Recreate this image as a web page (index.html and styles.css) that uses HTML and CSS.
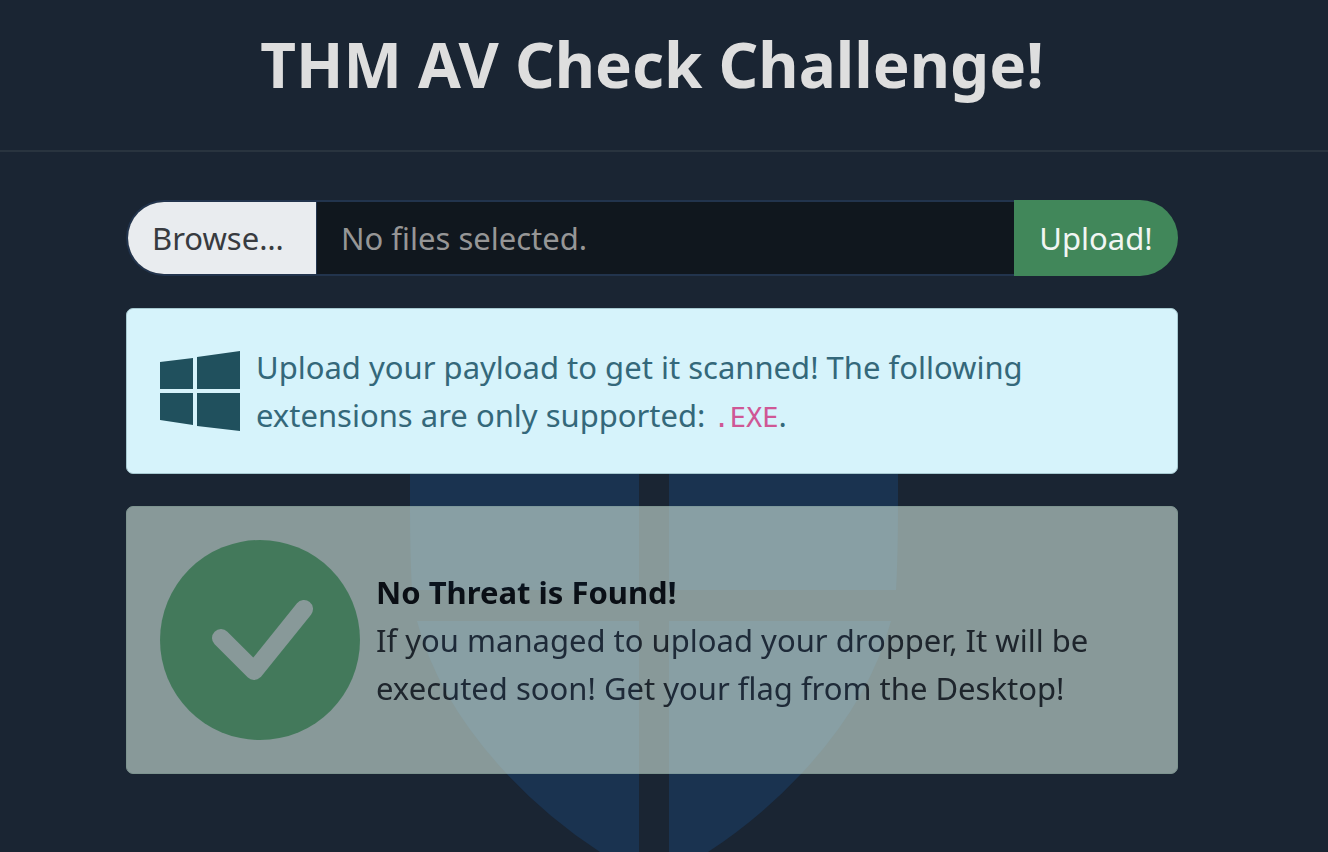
FILE: index.html
```html
<!DOCTYPE html>
<html lang="en">
<head>
<meta charset="utf-8">
<meta name="viewport" content="width=device-width, initial-scale=1">
<title>THM AV Check Challenge!</title>
<link rel="stylesheet" href="styles.css">
</head>
<body>
<svg class="shield" viewBox="0 0 488 540" aria-hidden="true">
  <path d="M0 60Q120 45 229 0V260H2Q0 225 0 170Z"/>
  <path d="M488 60Q368 45 259 0V260H486Q488 225 488 170Z"/>
  <path d="M7 291H229V540Q190 522 190 522Q138 488 96 443Q28 370 7 291Z"/>
  <path d="M481 291H259V540Q298 522 298 522Q350 488 392 443Q460 370 481 291Z"/>
</svg>
<header class="header">
  <h1 class="title">THM AV Check Challenge!</h1>
</header>
<main class="main">
  <form class="upload">
    <div class="picker">
      <label class="browse" for="file">Browse…</label>
      <span class="filename">No files selected.</span>
      <input class="file" id="file" type="file">
    </div>
    <button class="submit" type="button">Upload!</button>
  </form>
  <section class="alert info">
    <svg class="windows" viewBox="0 0 80 80" aria-hidden="true">
      <path d="M0 11L33 7V38H0ZM37 6L80 0V38H37ZM0 42H33V74L0 69ZM37 42H80V80L37 75Z"/>
    </svg>
    <p class="text">Upload your payload to get it scanned! The following extensions are only supported: <code class="code">.EXE</code>.</p>
  </section>
  <section class="alert success">
    <svg class="check" viewBox="0 0 200 200" aria-hidden="true">
      <mask id="tick">
        <rect width="200" height="200" fill="#fff"/>
        <path d="M61 98L94 131L144 69" fill="none" stroke="#000" stroke-width="18" stroke-linecap="round" stroke-linejoin="round"/>
      </mask>
      <circle cx="100" cy="100" r="100" mask="url(#tick)"/>
    </svg>
    <p class="text"><strong class="strong">No Threat is Found!</strong><br>If you managed to upload your dropper, It will be executed soon! Get your flag from the Desktop!</p>
  </section>
</main>
</body>
</html>
```
FILE: styles.css
```css
* { box-sizing: border-box; }
body {
  margin: 0;
  min-height: 100vh;
  position: relative;
  overflow: hidden;
  background: #1a2533;
  color: #212529;
  font: 31px/48px "Noto Sans", sans-serif;
}
.shield {
  position: absolute;
  z-index: -1;
  top: 330px;
  left: calc(50% - 254px);
  width: 488px;
  fill: #1a3350;
}
.header {
  padding: 26px 24px 48px 0;
  border-bottom: 2px solid #29343f;
}
.title {
  margin: 0;
  color: #dedede;
  font-size: 62px;
  line-height: 76px;
  text-align: center;
}
.main {
  display: flex;
  flex-direction: column;
  gap: 32px;
  padding: 48px 150px 78px 126px;
}
.upload { display: flex; height: 76px; }
.picker {
  position: relative;
  flex: 1;
  display: flex;
  align-items: stretch;
  overflow: hidden;
  border: 2px solid #22344d;
  border-right: 0;
  border-radius: 38px 0 0 38px;
  background: #10171e;
  line-height: 72px;
}
.browse {
  width: 189px;
  padding-left: 24px;
  border-right: 1px solid #22344d;
  background: #e9ecef;
  color: #383b40;
}
.filename { padding-left: 24px; color: #969696; }
.file {
  position: absolute;
  inset: 0;
  width: 100%;
  opacity: 0;
}
.submit {
  width: 164px;
  padding: 0;
  border: 0;
  border-radius: 0 38px 38px 0;
  background: #41875a;
  color: #f1f6f3;
  font: inherit;
}
.alert {
  display: flex;
  align-items: center;
  gap: 16px;
  padding: 33px;
  border: 1px solid;
  border-radius: 7px;
}
.info {
  min-height: 166px;
  border-color: #a6c8d0;
  background: #d6f3fb;
  color: #34687a;
}
.success {
  border-color: #bfdccd;
  background: #d1e7dd;
  opacity: 0.6;
}
.text { flex: 1; margin: 0; }
.windows { flex: none; width: 80px; fill: #20505d; }
.check { flex: none; width: 200px; fill: #5fb277; }
.strong { color: #000; }
.code {
  color: #cf5795;
  font-family: "DejaVu Sans Mono", monospace;
  font-size: 27px;
  line-height: 32px;
}
```
